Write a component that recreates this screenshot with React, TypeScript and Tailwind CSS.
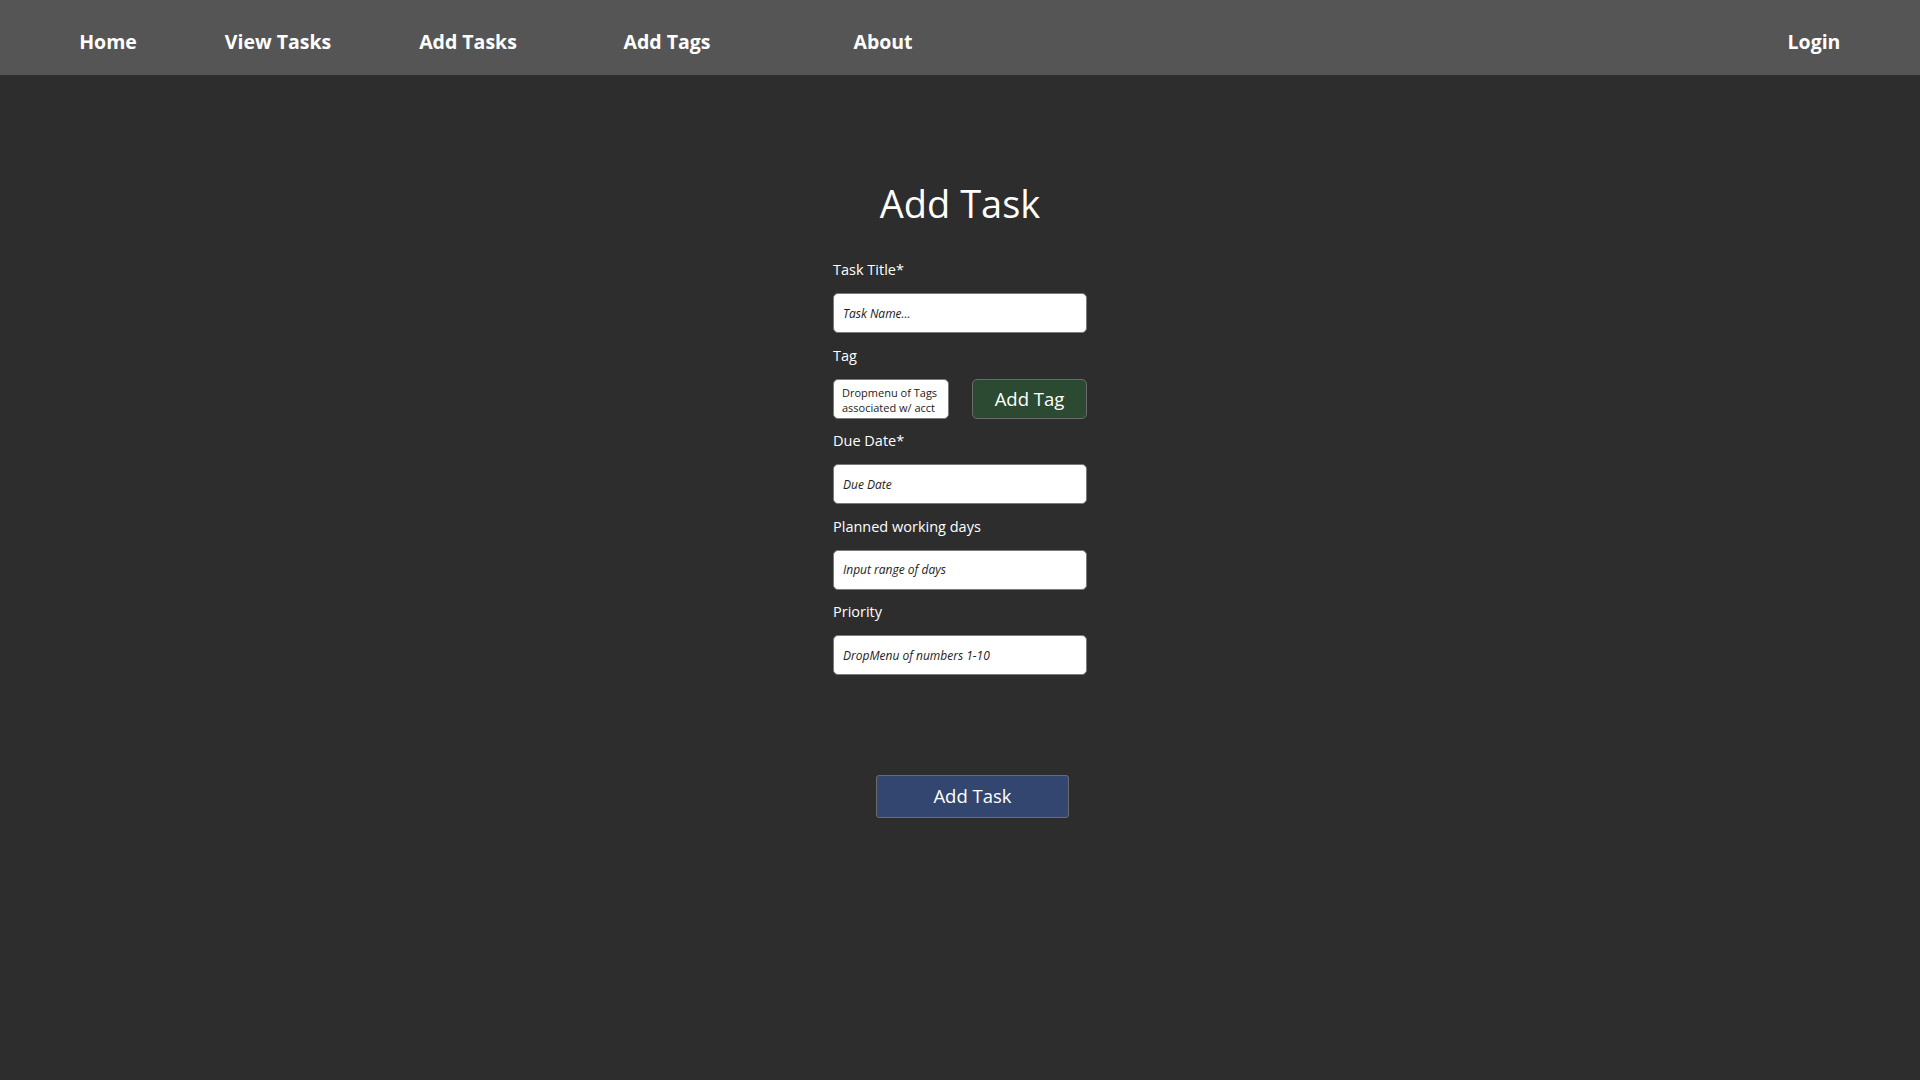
import React from 'react';

const navItems = [
  { label: 'Home', w: 'w-[216px]' },
  { label: 'View Tasks', w: 'w-[124px]' },
  { label: 'Add Tasks', w: 'w-[256px]' },
  { label: 'Add Tags', w: 'w-[142px]' },
  { label: 'About', w: 'w-[290px]' },
];

function Field({ label, placeholder }: { label: string; placeholder: string }) {
  return (
    <div className="flex flex-col">
      <label className="text-[14.5px] leading-[20px] text-white">{label}</label>
      <input
        placeholder={placeholder}
        className="mt-[13px] h-[40px] w-full rounded-[5px] border border-[#7a7a7a] bg-white px-[9px] text-[12px] italic text-[#222] placeholder:italic placeholder:text-[#222] outline-none"
      />
    </div>
  );
}

export default function App() {
  return (
    <div className="min-h-screen w-full bg-[#2d2d2d] font-['Open_Sans',sans-serif] text-white">
      {/* Nav bar */}
      <nav className="flex h-[75px] items-center bg-[#555555] pt-[9px] text-[19.5px] font-bold">
        {navItems.map((n) => (
          <a key={n.label} className={`${n.w} text-center`}>
            {n.label}
          </a>
        ))}
        <a className="ml-auto w-[212px] text-center">Login</a>
      </nav>

      <main className="flex flex-col items-center">
        <h1 className="mt-[106px] text-[38px] leading-[44px] font-normal">Add Task</h1>

        <form className="mt-[35px] flex w-[254px] flex-col gap-[12.5px]">
          <Field label="Task Title*" placeholder="Task Name..." />

          <div className="flex flex-col">
            <label className="text-[14.5px] leading-[20px]">Tag</label>
            <div className="mt-[13px] flex h-[40px] items-stretch justify-between">
              <div className="w-[116px] rounded-[5px] border border-[#7a7a7a] bg-white px-[8px] pt-[5px] text-[11px] leading-[15px] text-[#222]">
                Dropmenu of Tags associated w/ acct
              </div>
              <button
                type="button"
                className="w-[115px] rounded-[5px] border border-[#6b6b6b] bg-[#2c4a31] text-[18.5px] text-white"
              >
                Add Tag
              </button>
            </div>
          </div>

          <Field label="Due Date*" placeholder="Due Date" />
          <Field label="Planned working days" placeholder="Input range of days" />
          <Field label="Priority" placeholder="DropMenu of numbers 1-10" />

          <button
            type="button"
            className="mt-[87px] ml-[43px] h-[43px] w-[193px] rounded-[3px] border border-[#6b6b6b] bg-[#334670] text-[18.5px] text-white"
          >
            Add Task
          </button>
        </form>
      </main>
    </div>
  );
}
